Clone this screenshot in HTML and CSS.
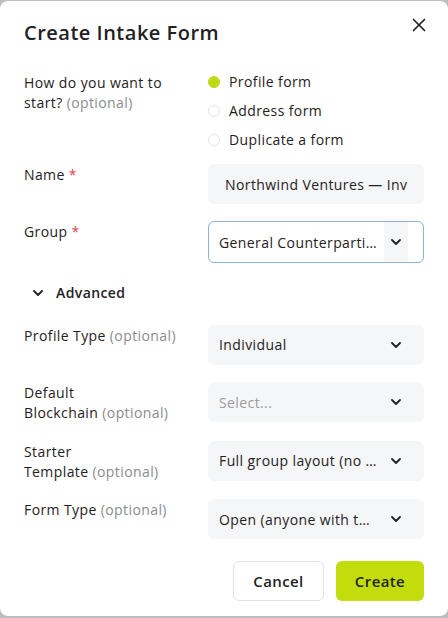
FILE: index.html
```html
<!DOCTYPE html>
<html lang="en">
<head>
    <meta charset="UTF-8">
    <meta name="viewport" content="width=device-width, initial-scale=1.0">
    <title>Create Intake Form</title>
    <link rel="stylesheet" href="styles.css">
</head>
<body>
    <div class="dialog">
        <div class="dialog-head">
            <h1>Create Intake Form</h1>
            <button class="close" aria-label="Close">
                <svg width="14" height="14" viewBox="0 0 14 14"><path d="M1.5 1.5l11 11M12.5 1.5l-11 11" stroke="#1f2124" stroke-width="1.7" stroke-linecap="round"/></svg>
            </button>
        </div>

        <div class="row row-radio">
            <label class="lbl">How do you want to start? <span class="opt">(optional)</span></label>
            <div class="radios">
                <div class="radio"><span class="dot on"></span>Profile form</div>
                <div class="radio"><span class="dot"></span>Address form</div>
                <div class="radio"><span class="dot"></span>Duplicate a form</div>
            </div>
        </div>

        <div class="row">
            <label class="lbl">Name <span class="req">*</span></label>
            <div class="field input"><span class="val">Northwind Ventures — Investor Onboarding</span></div>
        </div>

        <div class="row">
            <label class="lbl">Group <span class="req">*</span></label>
            <div class="field select focused">
                <span class="val dots">General Counterparties</span>
                <span class="caret boxed"><svg width="10" height="6" viewBox="0 0 10 6"><path d="M1 1l4 4 4-4" fill="none" stroke="#1f2124" stroke-width="1.8" stroke-linecap="round" stroke-linejoin="round"/></svg></span>
            </div>
        </div>

        <div class="advanced">
            <svg width="10" height="6" viewBox="0 0 10 6"><path d="M1 1l4 4 4-4" fill="none" stroke="#1f2124" stroke-width="1.8" stroke-linecap="round" stroke-linejoin="round"/></svg>
            <span>Advanced</span>
        </div>

        <div class="row">
            <label class="lbl">Profile Type <span class="opt">(optional)</span></label>
            <div class="field select">
                <span class="val">Individual</span>
                <span class="caret"><svg width="10" height="6" viewBox="0 0 10 6"><path d="M1 1l4 4 4-4" fill="none" stroke="#1f2124" stroke-width="1.8" stroke-linecap="round" stroke-linejoin="round"/></svg></span>
            </div>
        </div>

        <div class="row">
            <label class="lbl">Default <span class="keep">Blockchain <span class="opt">(optional)</span></span></label>
            <div class="field select">
                <span class="val muted">Select...</span>
                <span class="caret"><svg width="10" height="6" viewBox="0 0 10 6"><path d="M1 1l4 4 4-4" fill="none" stroke="#1f2124" stroke-width="1.8" stroke-linecap="round" stroke-linejoin="round"/></svg></span>
            </div>
        </div>

        <div class="row">
            <label class="lbl">Starter <span class="keep">Template <span class="opt">(optional)</span></span></label>
            <div class="field select">
                <span class="val">Full group layout (no …</span>
                <span class="caret"><svg width="10" height="6" viewBox="0 0 10 6"><path d="M1 1l4 4 4-4" fill="none" stroke="#1f2124" stroke-width="1.8" stroke-linecap="round" stroke-linejoin="round"/></svg></span>
            </div>
        </div>

        <div class="row">
            <label class="lbl">Form Type <span class="opt">(optional)</span></label>
            <div class="field select">
                <span class="val">Open (anyone with t…</span>
                <span class="caret"><svg width="10" height="6" viewBox="0 0 10 6"><path d="M1 1l4 4 4-4" fill="none" stroke="#1f2124" stroke-width="1.8" stroke-linecap="round" stroke-linejoin="round"/></svg></span>
            </div>
        </div>

        <div class="actions">
            <button class="btn cancel">Cancel</button>
            <button class="btn create">Create</button>
        </div>
    </div>
</body>
</html>
```

FILE: styles.css
```css
* { box-sizing: border-box; }
body { margin: 0; background: #bdbdbd; font-family: "Open Sans", "Noto Sans", sans-serif; color: #1f2124; letter-spacing: 0.4px; }
.dialog { margin-top: 1px; height: 615px; background: #fff; border-radius: 8px; padding: 19px 24px 0 24px; }
.dialog-head { display: flex; justify-content: space-between; align-items: flex-start; height: 52px; }
h1 { margin: 0; font-size: 20px; font-weight: 600; line-height: 26px; letter-spacing: 0.5px; }
.close { background: none; border: none; padding: 0; margin: -2px -2px 0 0; cursor: pointer; }
.row { display: grid; grid-template-columns: 184px 216px; margin-bottom: 17.4px; align-items: start; }
.lbl { font-size: 14px; line-height: 20px; padding-top: 1px; padding-right: 22px; }
.keep { white-space: nowrap; }
.opt { color: #8a8c8f; }
.req { color: #e0474c; }
.row-radio { margin-bottom: 14px; }
.radios { display: flex; flex-direction: column; gap: 9px; }
.radio { display: flex; align-items: center; font-size: 14px; line-height: 20px; }
.dot { width: 12px; height: 12px; border-radius: 50%; border: 1px solid #e3e5e8; margin-right: 9px; }
.dot.on { background: #bfd915; border-color: #bfd915; }
.field { height: 40px; border-radius: 6px; background: #f5f6f7; font-size: 14px; display: flex; align-items: center; }
.field .val { flex: 1; min-width: 0; white-space: nowrap; overflow: hidden; }
.val.dots { text-overflow: ellipsis; padding-right: 6px; }
.input { padding: 0 16px 0 17px; }
.select { padding-left: 11px; }
.muted { color: #9a9ca0; }
.caret { flex: none; width: 24px; height: 100%; display: flex; align-items: center; justify-content: center; margin-right: 16px; }
.focused { background: #fff; border: 1px solid #8fb1d4; height: 42px; padding-left: 10px; }
.caret.boxed { background: #f5f6f7; margin-right: 15px; }
.advanced { display: flex; align-items: center; gap: 13px; font-size: 14px; font-weight: 600; padding-left: 9px; margin: 19.5px 0 22px; line-height: 20px; }
.actions { display: flex; justify-content: flex-end; gap: 12px; margin-top: 22px; }
.btn { height: 40px; border-radius: 6px; font-family: inherit; font-size: 15px; font-weight: 600; color: #1f2124; letter-spacing: 0.4px; }
.cancel { width: 91px; background: #fff; border: 1px solid #e2e3e5; }
.create { width: 88px; background: #c3dc0c; border: none; }
```
